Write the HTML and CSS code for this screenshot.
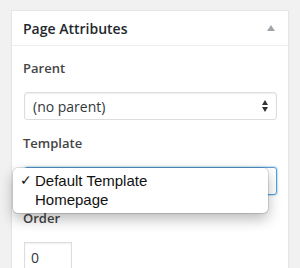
FILE: index.html
```html
<!DOCTYPE html>
<html>
<head>
<meta charset="utf-8">
<link rel="stylesheet" href="styles.css">
</head>
<body>
<div class="panel">
  <div class="head">
    <span class="title">Page Attributes</span>
    <span class="toggle"></span>
  </div>
  <div class="inside">
    <p class="label first">Parent</p>
    <div class="select">
      <span>(no parent)</span>
      <svg class="arrows" width="6" height="12" viewBox="0 0 6 12"><path d="M3 0L6 5H0z M0 7h6L3 12z" fill="#333"/></svg>
    </div>
    <p class="label">Template</p>
    <div class="tpl">
      <div class="select focus">
        <span>Default Template</span>
        <svg class="arrows" width="6" height="12" viewBox="0 0 6 12"><path d="M3 0L6 5H0z M0 7h6L3 12z" fill="#333"/></svg>
      </div>
      <div class="menu">
        <div class="opt"><span class="check">✓</span>Default Template</div>
        <div class="opt">Homepage</div>
      </div>
    </div>
    <p class="label">Order</p>
    <div class="order">0</div>
  </div>
</div>
</body>
</html>
```
FILE: styles.css
```css
html, body { margin: 0; padding: 0; }
body {
  background: #f1f1f1;
  width: 300px;
  height: 268px;
  overflow: hidden;
  font-family: "Open Sans", sans-serif;
  color: #444;
}
.panel {
  margin: 10px 0 0 11px;
  width: 276px;
  height: 300px;
  background: #fff;
  border: 1px solid #e5e5e5;
  box-shadow: 0 1px 1px rgba(0,0,0,.04);
}
.head {
  height: 34px;
  border-bottom: 1px solid #eee;
  display: flex;
  align-items: center;
  justify-content: space-between;
  padding: 0 13px 0 11px;
}
.title {
  font-size: 14px;
  font-weight: 600;
  color: #23282d;
}
.toggle {
  width: 0; height: 0;
  border-left: 4px solid transparent;
  border-right: 4px solid transparent;
  border-bottom: 6px solid #a0a5aa;
}
.inside {
  padding: 0 11px 0 12px;
}
.label {
  margin: 14px 0 0 -1px;
  font-size: 13px;
  font-weight: 600;
  line-height: 18px;
  color: #444;
}
.label.first { margin-top: 13px; }
.select {
  margin-top: 15px;
  height: 26px;
  border: 1px solid #ddd;
  border-radius: 3px;
  box-shadow: inset 0 1px 2px rgba(0,0,0,.07);
  display: flex;
  align-items: center;
  justify-content: space-between;
  padding: 0 8px 0 8px;
  font-size: 14px;
  color: #32373c;
}
.select.focus {
  border-color: #5b9dd9;
  box-shadow: 0 0 2px rgba(30,140,190,.8);
}
.tpl { position: relative; margin-top: 15px; }
.tpl .select { margin: 0; }
.menu {
  position: absolute;
  left: -11px;
  top: 1px;
  width: 255px;
  height: 45px;
  background: #fff;
  border-radius: 5px;
  box-shadow: 0 0 0 1px rgba(0,0,0,.12), 0 6px 14px rgba(0,0,0,.28);
  font-family: "Liberation Sans", Arial, sans-serif;
  font-size: 15px;
  color: #111;
  padding-top: 3px;
  box-sizing: border-box;
}
.opt {
  height: 19px;
  line-height: 19px;
  padding-left: 22px;
  position: relative;
}
.check {
  position: absolute;
  left: 7px;
  font-size: 14px;
}
.order {
  margin-top: 15px;
  width: 48px;
  height: 30px;
  border: 1px solid #ddd;
  box-shadow: inset 0 1px 2px rgba(0,0,0,.07);
  font-size: 14px;
  color: #32373c;
  padding-left: 6px;
  box-sizing: border-box;
  line-height: 30px;
}
```
